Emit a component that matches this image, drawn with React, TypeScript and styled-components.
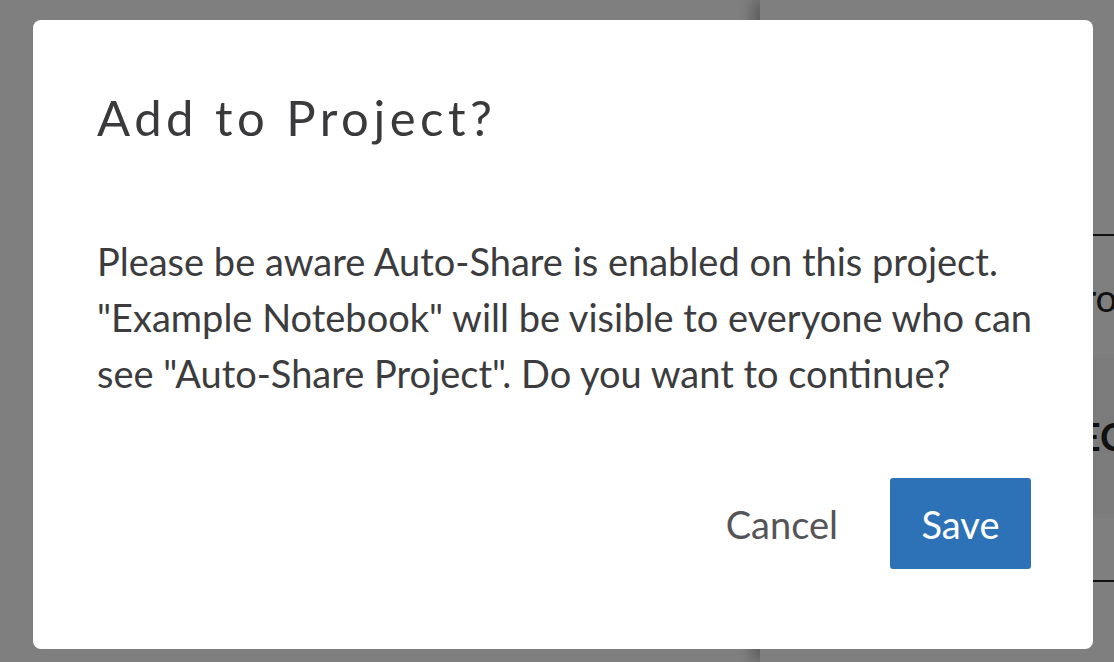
import React from "react";
import styled, { createGlobalStyle } from "styled-components";

const GlobalStyle = createGlobalStyle`
  html, body {
    margin: 0;
    padding: 0;
    width: 100%;
    height: 100%;
    overflow: hidden;
    background: #ffffff;
    font-family: Lato, "Open Sans", "Liberation Sans", sans-serif;
  }
  #root { height: 100%; }
`;

const Page = styled.div`
  display: flex;
  width: 1114px;
  height: 662px;
  background: #ffffff;
`;

const MainPane = styled.div`
  width: 760px;
  flex: none;
  background: #ffffff;
`;

const SidePanel = styled.aside`
  flex: 1;
  display: flex;
  flex-direction: column;
  background: #ffffff;
  box-shadow: -8px 0 14px rgba(0, 0, 0, 0.28);
  padding-top: 234px;
  overflow: hidden;
`;

const PanelRow = styled.div<{ $first?: boolean; $height: number }>`
  height: ${(p) => p.$height}px;
  flex: none;
  display: flex;
  align-items: center;
  border-top: ${(p) => (p.$first ? "2px solid #222" : "none")};
  background: ${(p) => (p.$first ? "#ffffff" : "#f7f7f7")};
  box-sizing: border-box;
`;

const PanelText = styled.span<{ $bold?: boolean; $indent: number }>`
  margin-left: ${(p) => p.$indent}px;
  font-family: Lato, sans-serif;
  font-size: 38px;
  font-weight: ${(p) => (p.$bold ? 700 : 400)};
  color: #222;
  white-space: nowrap;
`;

const PanelRule = styled.div`
  height: 2px;
  background: #222;
  margin-top: auto;
  margin-bottom: 80px;
`;

const Overlay = styled.div`
  position: fixed;
  inset: 0;
  background: rgba(0, 0, 0, 0.5);
  display: flex;
  align-items: flex-start;
  padding: 20px 0 0 33px;
  box-sizing: border-box;
`;

const Dialog = styled.div`
  width: 1060px;
  height: 629px;
  box-sizing: border-box;
  background: #ffffff;
  border-radius: 8px;
  padding: 69px 62px 80px 64px;
  display: flex;
  flex-direction: column;
`;

const Title = styled.h2`
  margin: 0;
  font-family: Lato, sans-serif;
  font-weight: 400;
  font-size: 49px;
  line-height: 56px;
  letter-spacing: 4.5px;
  color: #3a3a3c;
`;

const Body = styled.p`
  margin: 88px 0 0;
  font-family: Lato, sans-serif;
  font-size: 38px;
  line-height: 56px;
  color: #3c3c3e;
  white-space: nowrap;
`;

const Actions = styled.div`
  margin-top: auto;
  display: flex;
  justify-content: flex-end;
  align-items: center;
  gap: 28px;
`;

const Button = styled.button<{ $primary?: boolean }>`
  height: 91px;
  min-width: 141px;
  padding: 0 24px;
  box-sizing: border-box;
  border: none;
  border-radius: 3px;
  font-family: Lato, sans-serif;
  font-size: 38px;
  cursor: pointer;
  background: ${(p) => (p.$primary ? "#2d72b7" : "transparent")};
  color: ${(p) => (p.$primary ? "#ffffff" : "#555558")};
`;

export default function App() {
  return (
    <>
      <GlobalStyle />
      <Page>
        <MainPane />
        <SidePanel>
          <PanelRow $first $height={124}>
            <PanelText $indent={300}>Project</PanelText>
          </PanelRow>
          <PanelRow $height={156}>
            <PanelText $bold $indent={298}>SECTIONS</PanelText>
          </PanelRow>
          <PanelRule />
        </SidePanel>
      </Page>
      <Overlay>
        <Dialog role="dialog" aria-labelledby="dlg-title">
          <Title id="dlg-title">Add to Project?</Title>
          <Body>
            Please be aware Auto-Share is enabled on this project.
            <br />
            "Example Notebook" will be visible to everyone who can
            <br />
            see "Auto-Share Project". Do you want to continue?
          </Body>
          <Actions>
            <Button>Cancel</Button>
            <Button $primary>Save</Button>
          </Actions>
        </Dialog>
      </Overlay>
    </>
  );
}
